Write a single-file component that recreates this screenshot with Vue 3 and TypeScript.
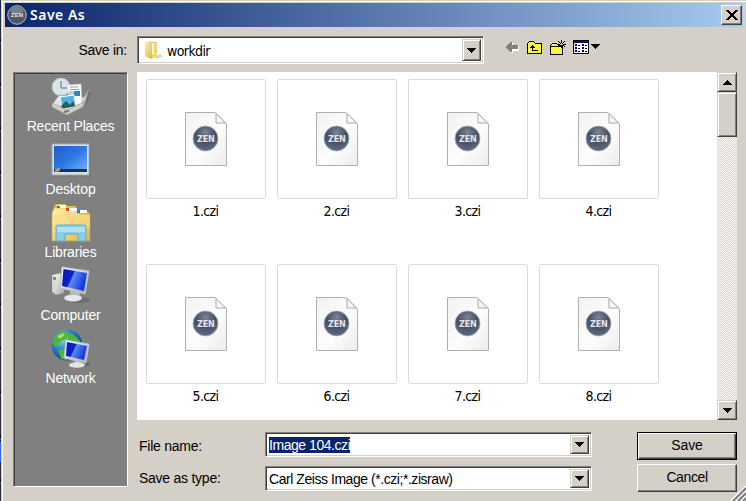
<script setup lang="ts">
const files: string[] = Array.from({ length: 8 }, (_, i) => `${i + 1}.czi`)
const places = [
  { id: 'recent', label: 'Recent Places' },
  { id: 'desktop', label: 'Desktop' },
  { id: 'libraries', label: 'Libraries' },
  { id: 'computer', label: 'Computer' },
  { id: 'network', label: 'Network' },
]
</script>

<template>
  <div class="screen">
    <div class="backdrop"><i></i></div>
    <div class="dialog">
      <svg class="defs" width="0" height="0">
        <defs>
          <radialGradient id="badge" cx=".5" cy=".25" r=".8">
            <stop offset="0" stop-color="#7b8496" /><stop offset=".5" stop-color="#464f63" /><stop offset="1" stop-color="#657087" />
          </radialGradient>
          <linearGradient id="paper" x1="0" y1="0" x2="1" y2="1">
            <stop offset="0" stop-color="#f1f1f1" /><stop offset=".55" stop-color="#fdfdfd" /><stop offset="1" stop-color="#ececec" />
          </linearGradient>
          <linearGradient id="blue" x1="0" y1="0" x2="1" y2="1">
            <stop offset="0" stop-color="#1d5ac9" /><stop offset=".5" stop-color="#2e78e4" /><stop offset="1" stop-color="#77b4fb" />
          </linearGradient>
          <linearGradient id="screenblue" x1="0" y1="0" x2="1" y2=".4">
            <stop offset="0" stop-color="#0519ae" /><stop offset=".45" stop-color="#0925cf" /><stop offset=".5" stop-color="#5c8cf0" /><stop offset="1" stop-color="#1238dc" />
          </linearGradient>
          <linearGradient id="folder" x1="0" y1="0" x2="1" y2="1">
            <stop offset="0" stop-color="#fff0a4" /><stop offset="1" stop-color="#dfb84d" />
          </linearGradient>
          <linearGradient id="metal" x1="0" y1="0" x2="1" y2="1">
            <stop offset="0" stop-color="#fff" /><stop offset="1" stop-color="#a9adb0" />
          </linearGradient>
          <radialGradient id="globe" cx=".35" cy=".3" r=".75">
            <stop offset="0" stop-color="#8fd5f4" /><stop offset=".5" stop-color="#267fc5" /><stop offset="1" stop-color="#0a3b80" />
          </radialGradient>
        </defs>
      </svg>

      <header class="titlebar">
        <svg class="app-icon" width="20" height="20" viewBox="0 0 20 20">
          <circle cx="10" cy="10" r="9.3" fill="#505867" stroke="#b6bcc8" />
          <ellipse cx="10" cy="5.5" rx="6.5" ry="3.5" fill="#777e8c" />
          <text x="10" y="12.2" class="mini-zen">ZEN</text>
        </svg>
        <h1>Save As</h1>
        <button class="close" aria-label="Close">
          <svg width="12" height="10" viewBox="0 0 12 10" shape-rendering="crispEdges">
            <path d="M0 0h3v1h1v1h1v1h2V2h1V1h1V0h3v1h-1v1h-1v1H9v1H8v2h1v1h1v1h1v1h1v1H9V9H8V8H7V7H5v1H4v1H3v1H0V9h1V8h1V7h1V6h1V4H3V3H2V2H1V1H0z" />
          </svg>
        </button>
      </header>

      <div class="lookup">
        <label>Save in:</label>
        <div class="combo look-combo">
          <svg class="folder-icon" width="20" height="20" viewBox="0 0 20 20">
            <path d="M11 16l7-2 1 3-5 2z" fill="#b5b5b5" opacity=".55" />
            <path d="M7 1.5l7 .8V17l-7 1.5z" fill="#e4c76b" />
            <path d="M8 3l3 .2V14l-2 2z" fill="#fff8d9" />
            <path d="M2 2l5-.8 2 2V19l-7-2.5z" fill="url(#folder)" />
            <path d="M9 15l2-2V3l3 .2V17l-5 1.5z" fill="#edd679" />
          </svg>
          <span class="tahoma">workdir</span>
          <button class="drop"><svg width="9" height="5" viewBox="0 0 9 5" shape-rendering="crispEdges"><path d="M0 0h9v1H8v1H7v1H6v1H5v1H4V4H3V3H2V2H1V1H0z" /></svg></button>
        </div>
        <nav class="tools">
          <svg width="13" height="11" viewBox="0 0 13 11" shape-rendering="crispEdges">
            <path d="M5 1h2v3h6v5H7v2H5v-1H4V9H3V8H2V7H1V6h4z" fill="#fff" />
            <path d="M4 0h2v3h6v4H6v3H4V9H3V8H2V7H1V6H0V4h1V3h1V2h1V1h1z" fill="#808080" />
          </svg>
          <svg width="15" height="13" viewBox="0 0 15 13" shape-rendering="crispEdges">
            <path d="M2 0h5v1h1v1h7v11H0V2h1V1h1z" />
            <path d="M2 1h5v1h1v1h6v9H1V2h1z" fill="#fcf636" />
            <path d="M5 4h1v1h1v1h1v1H6v2h5v1H5V7H3V6h1V5h1z" />
          </svg>
          <svg width="16" height="15" viewBox="0 0 16 15" shape-rendering="crispEdges">
            <path d="M2 3h5v1h1v1h5v10H0V5h1V4h1z" />
            <path d="M2 4h5v1h1v1h4v8H1V5h1z" fill="#fcf636" />
            <path d="M1 6h11v1H1z" />
            <path d="M11 0h1v3h-1zM8 1h1v1H8zM9 2h1v1H9zM10 3h1v1h-1zM14 1h1v1h-1zM13 2h1v1h-1zM12 3h1v1h-1zM8 4h2v1H8zM13 4h3v1h-3zM11 5h1v3h-1zM13 5h1v1h-1zM14 6h1v1h-1zM9 6h1v1H9z" />
          </svg>
          <svg class="view-icon" width="27" height="14" viewBox="0 0 27 14" shape-rendering="crispEdges">
            <path d="M0 0h16v14H0z" /><path d="M1 3h14v10H1z" fill="#fff" /><path d="M1 1h14v2H1z" fill="#000080" />
            <path d="M2 4h2v2H2zM9 4h2v2H9zM2 7h2v2H2zM9 7h2v2H9zM2 10h2v2H2zM9 10h2v2H9z" fill="#000080" />
            <path d="M5 5h2v1H5zM12 5h2v1h-2zM5 8h2v1H5zM12 8h2v1h-2zM5 11h2v1H5zM12 11h2v1h-2z" />
            <path d="M18 4h9v1h-1v1h-1v1h-1v1h-1v1h-1V8h-1V7h-1V6h-1V5h-1z" />
          </svg>
        </nav>
      </div>

      <main>
        <aside class="places">
          <a v-for="p in places" :key="p.id" :class="p.id">
            <svg width="40" height="40" viewBox="0 0 40 40">
              <template v-if="p.id === 'recent'">
                <path d="M3 30l13 8 19-9 6-14-5 1-5 13-16 5z" fill="#555" opacity=".35" />
                <circle cx="10" cy="10" r="9" fill="#dce4e8" stroke="#b1bdc2" /><path d="M10 4v7h6" fill="none" stroke="#4e7187" />
                <path d="M3 25L8 18l25 2 5-8-5 17-17 7-15-8z" fill="url(#metal)" stroke="#8e8c84" stroke-width=".7" />
                <path d="M16 8l14-1 1 20-12 2z" fill="#fafafa" stroke="#c5cdd1" stroke-width=".6" />
                <path d="M19 10h8M19 12.500h9M18 15h5M18 17h5" stroke="#91a4ae" /><path d="M23 14h6v5h-6z" fill="#3387ba" />
                <path d="M9 20l14-2 2 12-14 2z" fill="#51b4e6" stroke="#fff" /><path d="M10 29l5-5 4 4 3-4 2 5-13 3z" fill="#21635c" />
                <path d="M1 26l15 7 17-8-1 5-16 8-15-8z" fill="#d0cfc8" stroke="#98958b" stroke-width=".6" /><path d="M13 34l5-1v2l-5 1z" fill="#777" />
              </template>
              <template v-else-if="p.id === 'desktop'">
                <rect x="1.500" y="4.500" width="38" height="32" fill="#5f6468" opacity=".5" />
                <rect x="1" y="4" width="37" height="31" fill="#d7e0e5" stroke="#9ca8b1" />
                <rect x="3" y="6" width="33" height="26" fill="url(#blue)" /><path d="M3 29h33v3H3z" fill="#19344f" />
                <path d="M4 29h3v3H4z" fill="#e07a38" /><path d="M6 28h3v3H6z" fill="#83b548" />
              </template>
              <template v-else-if="p.id === 'libraries'">
                <path d="M3 6V3l2-2h9l2 2h9v6h13v29H2z" fill="#e0bc59" />
                <path d="M3 5h12l1 2h11l1 4h11v27H1V10z" fill="url(#folder)" stroke="#c99f38" stroke-width=".6" />
                <path d="M6 2h9v3H6zM15 5h11v3H15zM26 7h10v3H26z" fill="#fff" /><path d="M6 3h3v2H6z" fill="#24a252" /><path d="M15 5h3v3h-3z" fill="#e04827" /><path d="M26 7h3v3h-3z" fill="#2679d4" />
                <path d="M2 12h37v13H1z" fill="#f7dd86" opacity=".55" /><path d="M1 20l17 3-5-10M2 29l16-6-11-8" stroke="#fff8d2" fill="none" opacity=".5" />
                <path d="M5 24q0-2 2-2h25q3 0 3 2v14h-8v-7H14v7H5z" fill="#88cdea" stroke="#62aacd" /><path d="M6 24h28v5H6z" fill="#b8e4f4" opacity=".8" />
              </template>
              <template v-else-if="p.id === 'computer'">
                <ellipse cx="27" cy="34" rx="12" ry="3" fill="#444" opacity=".35" />
                <path d="M1 9l8-2 4 1v19l-8 2-4-3z" fill="url(#metal)" stroke="#888" stroke-width=".5" /><path d="M2 10h3v15H2z" fill="#d5d9db" /><path d="M2 11h3v3H2z" fill="#55ae3d" />
                <path d="M19 25l10 1-1 6h-8z" fill="#b7bdc1" /><ellipse cx="22" cy="32" rx="9" ry="3.500" fill="#e7eaec" stroke="#aaa" stroke-width=".6" />
                <path d="M11 1l27 4-4 23-25-6z" fill="url(#metal)" stroke="#b8bfc5" /><path d="M12.500 3l23.500 4-3 18-22-5z" fill="url(#screenblue)" />
              </template>
              <template v-else>
                <circle cx="16" cy="16" r="15.500" fill="url(#globe)" />
                <path d="M4 6l8-4 6 2-3 6-5 2-4 6-5-3zM18 4l5 2 6 6 1 5-7-3-5 2-2-5zM7 21l7-1 5 6-3 5-6-1z" fill="#4eb538" /><path d="M6 7l6-3 2 2-5 4z" fill="#a6df69" />
                <ellipse cx="30" cy="35" rx="9" ry="3" fill="#333" opacity=".3" />
                <path d="M23 29l8 1-1 6h-6z" fill="#b8bec3" /><ellipse cx="26" cy="36" rx="8" ry="2.800" fill="#e1e5e7" />
                <path d="M15 11l23 4-3 19-22-5z" fill="url(#metal)" stroke="#b8bfc5" /><path d="M16 13l20 4-3 14-18-4z" fill="url(#screenblue)" />
              </template>
            </svg>
            <span>{{ p.label }}</span>
          </a>
        </aside>

        <section class="browser">
          <div class="files">
            <figure v-for="f in files" :key="f">
              <div class="thumb">
                <svg width="42" height="54" viewBox="0 0 42 54">
                  <path d="M.5.500H30L41.500 12v41.500H.5z" fill="url(#paper)" stroke="#b0b0b0" />
                  <path d="M31 1.500V11h9.500z" fill="#f7f7f7" stroke="#aaa" />
                  <circle cx="20.500" cy="26.500" r="12.500" fill="url(#badge)" stroke="#a5abb7" stroke-width=".8" />
                  <text x="20.800" y="30" class="zen">ZEN</text>
                </svg>
              </div>
              <figcaption class="tahoma">{{ f }}</figcaption>
            </figure>
          </div>
          <div class="scrollbar">
            <button class="scroll"><svg width="9" height="5" viewBox="0 0 9 5" shape-rendering="crispEdges"><path d="M4 0h1v1h1v1h1v1h1v1h1v1H0V4h1V3h1V2h1V1h1z" /></svg></button>
            <div class="thumbbar"></div>
            <div class="track"></div>
            <button class="scroll"><svg width="9" height="5" viewBox="0 0 9 5" shape-rendering="crispEdges"><path d="M0 0h9v1H8v1H7v1H6v1H5v1H4V4H3V3H2V2H1V1H0z" /></svg></button>
          </div>
        </section>

        <form class="fields" @submit.prevent>
          <label>File name:</label>
          <div class="combo"><span class="selected">Image 104.czi</span><button class="drop" type="button"><svg width="9" height="5" viewBox="0 0 9 5" shape-rendering="crispEdges"><path d="M0 0h9v1H8v1H7v1H6v1H5v1H4V4H3V3H2V2H1V1H0z" /></svg></button></div>
          <button class="action default"><span class="save-text">Save</span></button>
          <label>Save as type:</label>
          <div class="combo"><span class="type">Carl Zeiss Image (*.czi;*.zisraw)</span><button class="drop" type="button"><svg width="9" height="5" viewBox="0 0 9 5" shape-rendering="crispEdges"><path d="M0 0h9v1H8v1H7v1H6v1H5v1H4V4H3V3H2V2H1V1H0z" /></svg></button></div>
          <button class="action" type="button"><span class="cancel-text">Cancel</span></button>
        </form>
      </main>
      <svg class="grip" width="15" height="15" viewBox="0 0 15 15">
        <path d="M0 15L15 0M5 15L15 5M10 15l5-5" stroke="#fff" stroke-width="1.500" />
        <path d="M2 15L15 2M7 15l8-8M12 15l3-3" stroke="#808080" stroke-width="2" />
      </svg>
    </div>
  </div>
</template>

<style>
body { margin: 0; overflow: hidden; }
</style>

<style scoped>
* { box-sizing: border-box; }
.screen { display: flex; width: 746px; height: 501px; background: #d4d0c8; font: 14px/16px "Liberation Sans", sans-serif; color: #000; overflow: hidden; }
.backdrop { width: 1px; background: repeating-linear-gradient(#252b48 0 39px, #07091c 39px 42px, #4b5069 42px 44px); padding-top: 442px; }
.backdrop i { display: block; height: 20px; background: #3269ff; }
.dialog { position: relative; flex: 1; margin: 1px 0 0 1px; border-top: 1px solid #fff; border-left: 1px solid #fff; padding: 1px 3px 0 2px; }
.defs { position: absolute; }
button { border: 0; padding: 0; margin: 0; background: #d4d0c8; color: #000; font: inherit; display: flex; align-items: center; justify-content: center; }
.titlebar { height: 24px; display: flex; align-items: center; padding: 0 1px 0 2px; background: linear-gradient(90deg, #0a246a, #a6caf0); }
.app-icon { margin-right: 3px; }
.mini-zen { font: bold 6px "Liberation Sans", sans-serif; fill: #e8eaf0; text-anchor: middle; }
h1 { flex: 1; margin: 0; color: #fff; font: 600 14px/20px "Noto Sans", sans-serif; letter-spacing: .5px; }
.close { width: 21px; height: 20px; border: 1px solid; border-color: #fff #404040 #404040 #fff; box-shadow: inset -1px -1px #808080; }
.lookup { height: 45px; display: flex; align-items: flex-start; padding-top: 9px; }
.lookup label { width: 132px; padding: 6px 10px 0 0; text-align: right; letter-spacing: -.25px; }
.combo { display: flex; align-items: center; background: #fff; border: 1px solid; border-color: #808080 #fff #fff #808080; box-shadow: inset 1px 1px #404040, inset -1px -1px #d4d0c8; padding: 2px; }
.look-combo { width: 347px; height: 28px; }
.folder-icon { margin: 0 4px 0 3px; }
.tahoma { font-family: "DejaVu Sans Condensed", "DejaVu Sans", sans-serif; font-size: 14px; letter-spacing: -.6px; }
.look-combo .tahoma { padding-top: 1px; }
.drop { width: 19px; height: 100%; margin-left: auto; border: 1px solid; border-color: #d4d0c8 #404040 #404040 #d4d0c8; box-shadow: inset 1px 1px #fff, inset -1px -1px #808080; }
.tools { display: flex; align-items: center; height: 20px; margin: 1px 0 0 22px; gap: 8px; }
.view-icon { margin-left: -1px; }
main { display: grid; grid-template: 348px 67px / 115px 600px; column-gap: 9px; margin-left: 8px; }
.places { grid-row: 1 / 3; border: 1px solid; border-color: #808080 #fff #fff #808080; box-shadow: inset 1px 1px #404040; background: #808080; color: #fff; padding-top: 4px; }
.places a { height: 63px; display: flex; flex-direction: column; align-items: center; white-space: nowrap; }
.places span { margin-top: 1px; letter-spacing: -.2px; }
.browser { display: flex; background: #fff; }
.files { flex: 1; display: grid; grid-template-columns: repeat(4, 120px); grid-auto-rows: 185px; column-gap: 11px; padding: 7px 0 0 9px; height: 348px; }
figure { margin: 0; }
.thumb { height: 120px; border: 1px solid #dadada; border-radius: 2px; display: flex; align-items: center; justify-content: center; }
figcaption { text-align: center; margin-top: 4px; padding-right: 1px; }
.zen { font: bold 9px "DejaVu Sans Condensed", sans-serif; fill: #e3e6ec; text-anchor: middle; letter-spacing: -.2px; }
.scrollbar { width: 20px; display: flex; flex-direction: column; }
.scroll, .thumbbar { border: 1px solid; border-color: #d4d0c8 #404040 #404040 #d4d0c8; box-shadow: inset 1px 1px #fff, inset -1px -1px #808080; background: #d4d0c8; }
.scroll { height: 20px; }
.thumbbar { height: 45px; }
.track { flex: 1; background: repeating-conic-gradient(#d4d0c8 0 25%, #fff 0 50%) 0 0 / 2px 2px; }
.fields { display: grid; grid-template: 28px 28px / 126px 327px 100px; row-gap: 4px; column-gap: 0; justify-content: start; padding: 12px 0 0 2px; align-items: start; }
.fields .combo { height: 25px; }
.fields .combo:nth-of-type(2) { margin-top: 2px; }
.fields label { padding-top: 6px; white-space: nowrap; letter-spacing: -.25px; }
.selected { background: #0a246a; color: #fff; margin-left: 1px; letter-spacing: -.45px; }
.type { margin-left: 1px; letter-spacing: -.45px; }
.cancel-text { letter-spacing: -.4px; }
.save-text { letter-spacing: -.1px; }
.action { width: 100px; height: 28px; margin-left: 45px; border: 1px solid; border-color: #fff #404040 #404040 #fff; box-shadow: inset -1px -1px #808080; }
.action span { margin-top: -2px; }
.action.default { border-color: #000; box-shadow: inset 1px 1px #fff, inset -1px -1px #404040, inset -2px -2px #808080; }
.grip { position: absolute; right: 0; bottom: 0; }
</style>
